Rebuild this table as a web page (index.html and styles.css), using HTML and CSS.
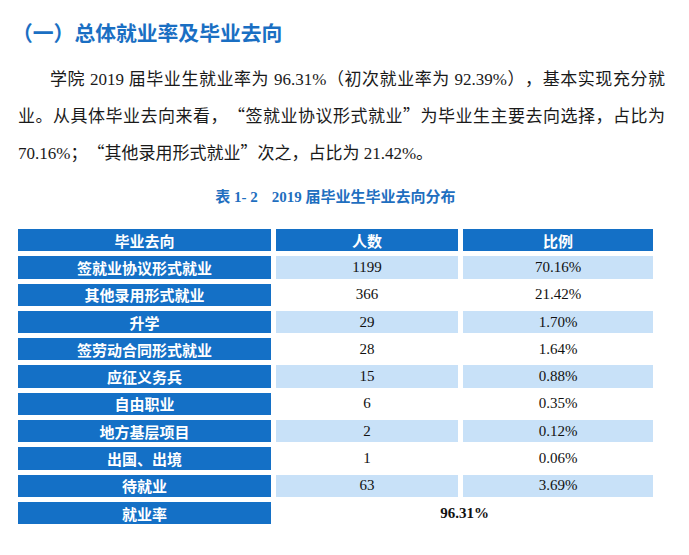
FILE: index.html
```html
<!DOCTYPE html>
<html lang="zh">
<head>
<meta charset="utf-8">
<title>总体就业率及毕业去向</title>
<link rel="stylesheet" href="styles.css">
</head>
<body>
<div class="page">
  <h1 class="heading">（一）总体就业率及毕业去向</h1>
  <p class="para">
    <span class="line line-first">学院 2019 届毕业生就业率为 96.31%（初次就业率为 92.39%），基本实现充分就</span>
    <span class="line">业。从具体毕业去向来看，<span class="q">“</span>签就业协议形式就业<span class="q">”</span>为毕业生主要去向选择，占比为</span>
    <span class="line line-last">70.16%；<span class="q">“</span>其他录用形式就业<span class="q">”</span>次之，占比为 21.42%。</span>
  </p>
  <div class="caption">表 1- 2<span class="cap-gap"></span>2019 届毕业生毕业去向分布</div>
  <div class="table">
    <div class="cell head">毕业去向</div><div class="cell head">人数</div><div class="cell head">比例</div>

    <div class="cell name">签就业协议形式就业</div><div class="cell val shade">1199</div><div class="cell val shade">70.16%</div>
    <div class="cell name">其他录用形式就业</div><div class="cell val">366</div><div class="cell val">21.42%</div>
    <div class="cell name">升学</div><div class="cell val shade">29</div><div class="cell val shade">1.70%</div>
    <div class="cell name">签劳动合同形式就业</div><div class="cell val">28</div><div class="cell val">1.64%</div>
    <div class="cell name">应征义务兵</div><div class="cell val shade">15</div><div class="cell val shade">0.88%</div>
    <div class="cell name">自由职业</div><div class="cell val">6</div><div class="cell val">0.35%</div>
    <div class="cell name">地方基层项目</div><div class="cell val shade">2</div><div class="cell val shade">0.12%</div>
    <div class="cell name">出国、出境</div><div class="cell val">1</div><div class="cell val">0.06%</div>
    <div class="cell name">待就业</div><div class="cell val shade">63</div><div class="cell val shade">3.69%</div>
    <div class="cell name">就业率</div><div class="cell val total">96.31%</div>
  </div>
</div>
</body>
</html>
```
FILE: styles.css
```css
html, body {
  margin: 0;
  padding: 0;
  background: #ffffff;
}

.page {
  width: 647px;
  padding: 18px 0 0 18px;
}

.heading {
  margin: 0 0 0 -6px;
  font-family: "Noto Sans CJK SC", sans-serif;
  font-size: 20.8px;
  line-height: 28px;
  font-weight: 700;
  color: #1a6fc3;
}

.para {
  margin: 15px 0 0 0;
  font-family: "Liberation Serif", "Noto Sans CJK SC", serif;
  font-size: 17px;
  line-height: 37px;
  color: #1a1a1a;
  text-spacing-trim: space-all;
}

.q {
  font-family: "Noto Sans CJK SC", sans-serif;
  line-height: 0;
}

.line {
  display: block;
  height: 37px;
  text-align: justify;
  text-align-last: justify;
}

.line-first {
  text-indent: 32px;
}

.line-last {
  text-align-last: left;
}

.caption {
  margin-top: 15px;
  width: 635px;
  text-align: center;
  font-family: "Liberation Serif", "Noto Sans CJK SC", serif;
  font-size: 15px;
  line-height: 20px;
  font-weight: 700;
  color: #1f6fc0;
}

.cap-gap {
  display: inline-block;
  width: 14px;
}

.table {
  margin-top: 22px;
  display: grid;
  grid-template-columns: 253px 182px 190px;
  grid-auto-rows: 22.3px;
  column-gap: 5px;
  row-gap: 5px;
}

.cell {
  display: flex;
  align-items: center;
  justify-content: center;
  font-size: 15px;
}

.head,
.name {
  background: #1470c6;
  color: #ffffff;
  font-family: "Noto Sans CJK SC", sans-serif;
  font-weight: 700;
  font-size: 15px;
}

.val {
  font-family: "Liberation Serif", serif;
  color: #111111;
}

.shade {
  background: #c8e1f8;
}

.total {
  grid-column: span 2;
  font-weight: 700;
}
```
